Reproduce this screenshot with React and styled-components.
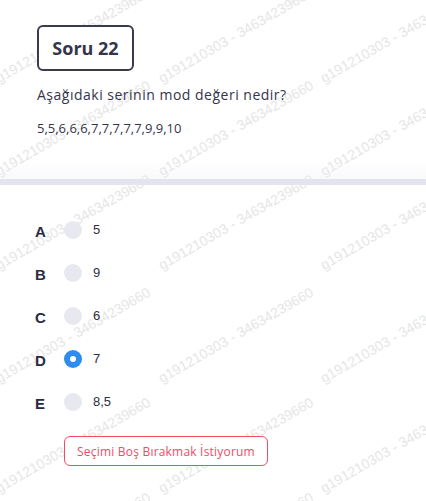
import React from "react";
import styled, { createGlobalStyle } from "styled-components";

const Global = createGlobalStyle`
  html, body { margin: 0; padding: 0; background: #fff; }
  body { font-family: "Open Sans", "Liberation Sans", sans-serif; }
  * { box-sizing: border-box; }
`;

const Page = styled.div`
  position: relative;
  width: 426px;
  min-height: 501px;
  overflow: hidden;
  background: #fff;
`;

const WatermarkLayer = styled.div`
  position: absolute;
  inset: 0;
  pointer-events: none;
  z-index: 0;
`;

const Mark = styled.span`
  position: absolute;
  font-family: "Liberation Sans", Arial, sans-serif;
  font-size: 14px;
  line-height: 1;
  color: #e6e6e6;
  white-space: nowrap;
  transform-origin: 0 100%;
  transform: rotate(-30deg);
`;

const Content = styled.div`
  position: relative;
  z-index: 1;
`;

const Header = styled.section`
  padding: 25px 37px 0;
  height: 179px;
  background: linear-gradient(to bottom, rgba(255,255,255,0) 0, rgba(255,255,255,0) 160px, rgba(240,240,246,0.4) 179px);
`;

const Badge = styled.div`
  display: inline-flex;
  align-items: center;
  justify-content: center;
  width: 97px;
  height: 46px;
  border: 2px solid #3b3b4f;
  border-radius: 6px;
  background: #fff;
  font-weight: 700;
  font-size: 18px;
  color: #34344a;
`;

const Question = styled.p`
  margin: 14px 0 0;
  font-size: 14px;
  letter-spacing: 0.5px;
  line-height: 20px;
  color: #34344a;
`;

const Series = styled.p`
  margin: 13px 0 0;
  font-size: 13px;
  line-height: 20px;
  color: #34344a;
`;

const Divider = styled.div`
  height: 6px;
  background: #e4e4ee;
`;

const Options = styled.section`
  padding: 36px 0 0 35px;
  display: flex;
  flex-direction: column;
  gap: 25px;
`;

const Row = styled.div`
  display: flex;
  align-items: center;
  height: 18px;
`;

const Letter = styled.span`
  width: 29px;
  padding-top: 3px;
  font-family: "Liberation Sans", Arial, sans-serif;
  font-weight: 700;
  font-size: 15px;
  color: #2a2a40;
`;

const Radio = styled.span`
  width: 18px;
  height: 18px;
  border-radius: 50%;
  background: ${(p) => (p.$checked ? "#2d8cf0" : "#e8e9f0")};
  display: flex;
  align-items: center;
  justify-content: center;
  &::after {
    content: "";
    display: ${(p) => (p.$checked ? "block" : "none")};
    width: 6px;
    height: 6px;
    border-radius: 50%;
    background: #fff;
  }
`;

const Value = styled.span`
  margin-left: 11px;
  font-family: "Liberation Sans", Arial, sans-serif;
  font-size: 13px;
  color: #2f2f3f;
  margin-top: -2px;
`;

const ClearButton = styled.button`
  display: block;
  margin: 25px 0 0 64px;
  width: 204px;
  height: 30px;
  border: 1px solid #f04c64;
  border-radius: 6px;
  background: #fff;
  color: #f04c64;
  font-family: "Open Sans", "Liberation Sans", sans-serif;
  font-size: 12px;
  letter-spacing: 0.2px;
  padding: 0;
  cursor: pointer;
`;

const options = [
  { l: "A", v: "5" },
  { l: "B", v: "9" },
  { l: "C", v: "6" },
  { l: "D", v: "7", checked: true },
  { l: "E", v: "8,5" },
];

const rows = [85, 178, 272, 385, 495, 590];
const cols = [0, 163, 325];
const markText = "g191210303 - 34634239660";

export default function App() {
  return (
    <>
      <Global />
      <Page>
        <WatermarkLayer>
          {rows.map((y) =>
            cols.map((x) => (
              <Mark key={`${x}-${y}`} style={{ left: x, top: y - 14 }}>
                {markText}
              </Mark>
            ))
          )}
        </WatermarkLayer>
        <Content>
          <Header>
            <Badge>Soru 22</Badge>
            <Question>Aşağıdaki serinin mod değeri nedir?</Question>
            <Series>5,5,6,6,6,7,7,7,7,7,9,9,10</Series>
          </Header>
          <Divider />
          <Options>
            {options.map((o) => (
              <Row key={o.l}>
                <Letter>{o.l}</Letter>
                <Radio $checked={o.checked} />
                <Value>{o.v}</Value>
              </Row>
            ))}
          </Options>
          <ClearButton>Seçimi Boş Bırakmak İstiyorum</ClearButton>
        </Content>
      </Page>
    </>
  );
}
